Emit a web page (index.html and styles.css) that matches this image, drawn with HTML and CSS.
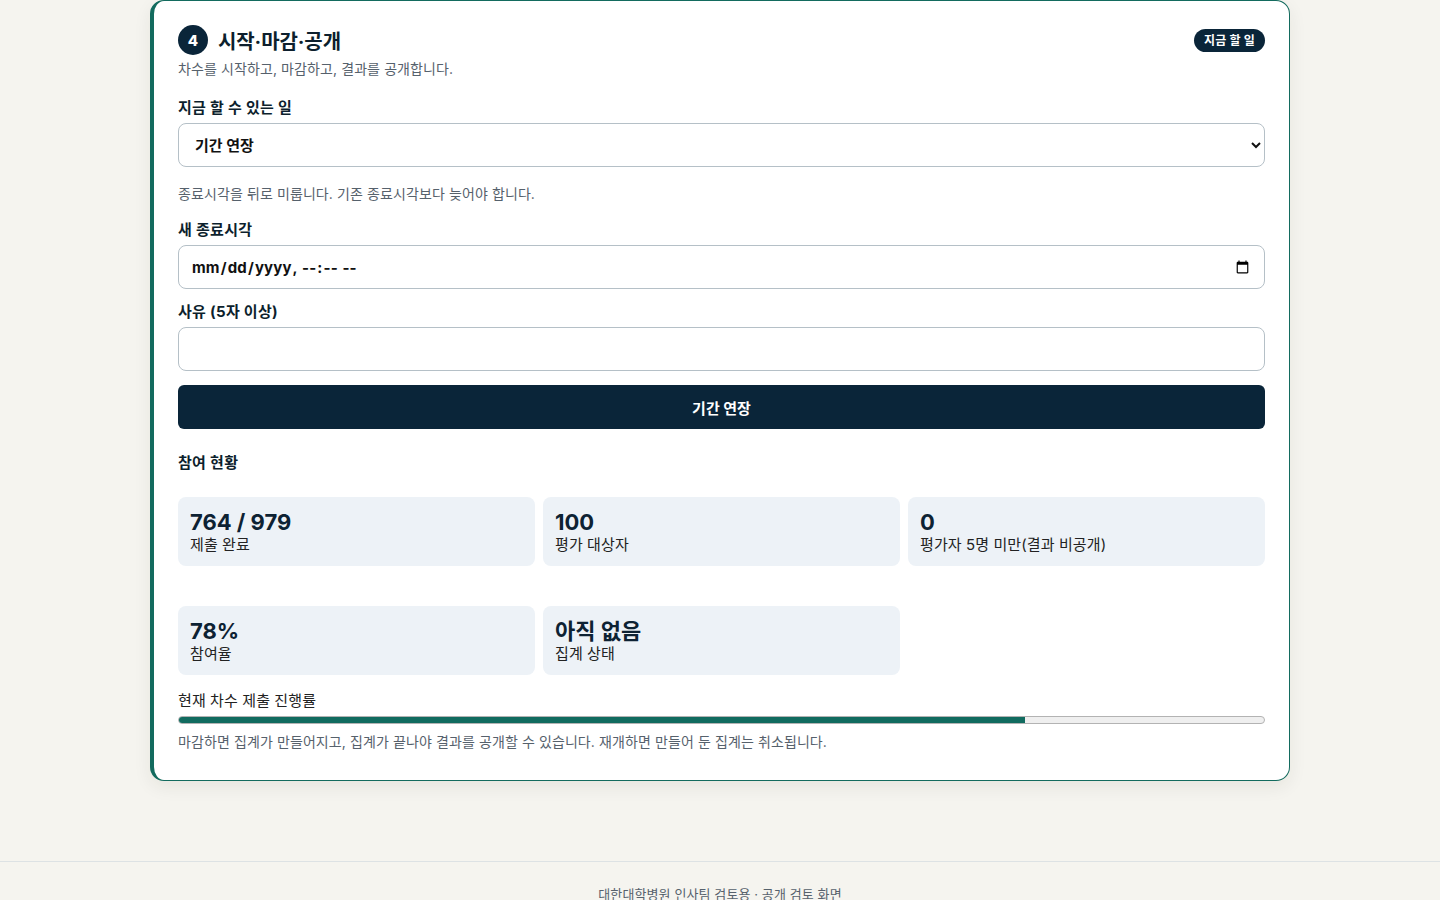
FILE: index.html
```html
<!DOCTYPE html>
<html lang="ko">
<head>
    <meta charset="UTF-8">
    <meta name="viewport" content="width=device-width" />
    <title>시작·마감·공개</title>
    <link rel="stylesheet" href="styles.css">
</head>
<body>
    <main class="page">
        <section class="step-card">
            <header class="step-head">
                <div class="step-title-row">
                    <span class="step-num">4</span>
                    <h2 class="step-title">시작·마감·공개</h2>
                </div>
                <span class="pill">지금 할 일</span>
            </header>
            <p class="step-desc">차수를 시작하고, 마감하고, 결과를 공개합니다.</p>

            <label class="field-label" for="action">지금 할 수 있는 일</label>
            <select id="action" class="control control-select">
                <option>기간 연장</option>
                <option>마감</option>
                <option>결과 공개</option>
            </select>
            <p class="help">종료시각을 뒤로 미룹니다. 기존 종료시각보다 늦어야 합니다.</p>

            <label class="field-label" for="new-end">새 종료시각</label>
            <input id="new-end" class="control control-date" type="datetime-local">

            <label class="field-label" for="reason">사유 (5자 이상)</label>
            <input id="reason" class="control" type="text">

            <button class="primary-btn">기간 연장</button>

            <h3 class="section-title">참여 현황</h3>
            <div class="stats">
                <div class="stat"><div class="stat-value">764 / 979</div><div class="stat-label">제출 완료</div></div>
                <div class="stat"><div class="stat-value">100</div><div class="stat-label">평가 대상자</div></div>
                <div class="stat"><div class="stat-value">0</div><div class="stat-label">평가자 5명 미만(결과 비공개)</div></div>
                <div class="stat"><div class="stat-value">78%</div><div class="stat-label">참여율</div></div>
                <div class="stat"><div class="stat-value">아직 없음</div><div class="stat-label">집계 상태</div></div>
            </div>

            <div class="progress-label">현재 차수 제출 진행률</div>
            <div class="progress"><div class="progress-fill" style="width: 78%"></div></div>
            <p class="help help-last">마감하면 집계가 만들어지고, 집계가 끝나야 결과를 공개할 수 있습니다. 재개하면 만들어 둔 집계는 취소됩니다.</p>
        </section>
    </main>

    <footer class="site-footer">대한대학병원 인사팀 검토용 · 공개 검토 화면</footer>
</body>
</html>
```

FILE: styles.css
```css
html {
    font-family: Inter, "Noto Sans CJK KR", sans-serif;
    box-sizing: border-box;
}

*,
*:before,
*:after {
    box-sizing: inherit;
}

body {
    margin: 0;
    background-color: #f5f4ef;
    color: #0d1f2d;
}

.page {
    width: 1140px;
    margin: 0 auto;
    padding-bottom: 80px;
}

.step-card {
    display: flex;
    flex-direction: column;
    background: white;
    border: 1px solid #136b5e;
    border-left-width: 4px;
    border-radius: 14px;
    padding: 24px 24px 28px 24px;
    box-shadow: 0 6px 18px rgba(40, 40, 20, 0.07);
}

.step-head {
    display: flex;
    justify-content: space-between;
    align-items: center;
}

.step-title-row {
    display: flex;
    align-items: center;
    gap: 10px;
}

.step-num {
    width: 30px;
    height: 30px;
    border-radius: 50%;
    background: #0a2539;
    color: white;
    font-size: 15px;
    font-weight: 800;
    display: flex;
    align-items: center;
    justify-content: center;
}

.step-title {
    margin: 0;
    font-size: 20px;
    font-weight: 700;
    letter-spacing: -0.1px;
}

.pill {
    background: #0a2539;
    color: white;
    font-size: 12px;
    font-weight: 700;
    padding: 3px 10px;
    border-radius: 12px;
    line-height: 17px;
    letter-spacing: 0.2px;
}

.step-desc {
    margin: 4px 0 0 0;
    font-size: 14px;
    color: #56616c;
    line-height: 20px;
    letter-spacing: 0.1px;
}

.field-label {
    display: block;
    font-size: 15px;
    font-weight: 700;
    margin-top: 18px;
    margin-bottom: 5px;
    line-height: 20px;
    letter-spacing: 0.3px;
}

.step-desc + .field-label {
    margin-top: 19px;
}

.control {
    height: 44px;
    width: 100%;
    border: 1px solid #b5c0c7;
    border-radius: 8px;
    background: white;
    font-family: inherit;
    font-size: 15px;
    font-weight: 700;
    color: #111;
    padding: 0 12px;
}

.control-select {
    padding: 0 10px 0 12px;
}

.control-date {
    padding: 0 12px 0 12px;
    letter-spacing: 0.15px;
}

.help {
    margin: 17px 0 0 0;
    font-size: 14px;
    color: #56616c;
    line-height: 20px;
    letter-spacing: 0.1px;
}

.help + .field-label {
    margin-top: 16px;
}

.control-date + .field-label {
    margin-top: 13px;
}

.primary-btn {
    margin-top: 14px;
    height: 44px;
    border: none;
    border-radius: 6px;
    background: #0a2539;
    color: white;
    font-family: inherit;
    font-size: 15px;
    font-weight: 700;
}

.section-title {
    margin: 24px 0 0 0;
    font-size: 15px;
    font-weight: 700;
    line-height: 20px;
    letter-spacing: 0.3px;
}

.stats {
    margin-top: 24px;
    display: grid;
    grid-template-columns: repeat(3, 1fr);
    gap: 40px 8px;
}

.stat {
    background: #edf2f7;
    border-radius: 8px;
    padding: 12px;
    height: 69px;
}

.stat-value {
    font-size: 22px;
    font-weight: 700;
    line-height: 26px;
    color: #0d2233;
}

.stat-label {
    font-size: 15px;
    line-height: 19px;
    color: #222;
    letter-spacing: 0.1px;
}

.progress-label {
    margin-top: 16px;
    font-size: 15px;
    line-height: 20px;
    color: #222;
    letter-spacing: 0.1px;
}

.progress {
    margin-top: 5px;
    height: 8px;
    border-radius: 4px;
    background: #efefef;
    border: 1px solid #b3b3b3;
    overflow: hidden;
}

.progress-fill {
    height: 100%;
    background: #116b5f;
}

.help-last {
    margin-top: 8px;
}

.site-footer {
    border-top: 1px solid #dde2e4;
    text-align: center;
    font-size: 13px;
    color: #56616c;
    padding: 22px 0 30px 0;
    letter-spacing: 0.1px;
}
```
